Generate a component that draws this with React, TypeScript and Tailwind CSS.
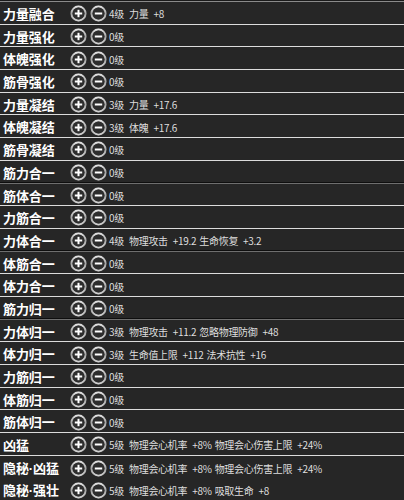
import React from 'react';

type Row = { name: string; level: number; attrs?: [string, string][] };

const rows: Row[] = [
  { name: '力量融合', level: 4, attrs: [['力量', '+8']] },
  { name: '力量强化', level: 0 },
  { name: '体魄强化', level: 0 },
  { name: '筋骨强化', level: 0 },
  { name: '力量凝结', level: 3, attrs: [['力量', '+17.6']] },
  { name: '体魄凝结', level: 3, attrs: [['体魄', '+17.6']] },
  { name: '筋骨凝结', level: 0 },
  { name: '筋力合一', level: 0 },
  { name: '筋体合一', level: 0 },
  { name: '力筋合一', level: 0 },
  { name: '力体合一', level: 4, attrs: [['物理攻击', '+19.2'], ['生命恢复', '+3.2']] },
  { name: '体筋合一', level: 0 },
  { name: '体力合一', level: 0 },
  { name: '筋力归一', level: 0 },
  { name: '力体归一', level: 3, attrs: [['物理攻击', '+11.2'], ['忽略物理防御', '+48']] },
  { name: '体力归一', level: 3, attrs: [['生命值上限', '+112'], ['法术抗性', '+16']] },
  { name: '力筋归一', level: 0 },
  { name: '体筋归一', level: 0 },
  { name: '筋体归一', level: 0 },
  { name: '凶猛', level: 5, attrs: [['物理会心机率', '+8%'], ['物理会心伤害上限', '+24%']] },
  { name: '隐秘·凶猛', level: 5, attrs: [['物理会心机率', '+8%'], ['物理会心伤害上限', '+24%']] },
  { name: '隐秘·强壮', level: 5, attrs: [['物理会心机率', '+8%'], ['吸取生命', '+8']] },
];

function RoundButton({ minus }: { minus?: boolean }) {
  const id = minus ? 'rm' : 'rp';
  return (
    <svg width="17" height="17" viewBox="0 0 17 17" className="shrink-0">
      <defs>
        <linearGradient id={id} x1="0" y1="0" x2="0" y2="1">
          <stop offset="0" stopColor="#e0e0e0" />
          <stop offset="0.5" stopColor="#a4a4a4" />
          <stop offset="1" stopColor="#d0d0d0" />
        </linearGradient>
      </defs>
      <circle cx="8.5" cy="8.5" r="8.3" fill="#444" />
      <circle cx="8.5" cy="8.5" r="7" fill="none" stroke={`url(#${id})`} strokeWidth="1.9" />
      <circle cx="8.5" cy="8.5" r="5.9" fill="#2d2d2d" />
      <line x1="4.8" y1="8.5" x2="12.2" y2="8.5" stroke="#fff" strokeWidth="2" />
      {!minus && <line x1="8.5" y1="4.8" x2="8.5" y2="12.2" stroke="#fff" strokeWidth="2" />}
    </svg>
  );
}

// names with a middle dot use a narrow latin dot like the game font
function Name({ text }: { text: string }) {
  const parts = text.split('·');
  if (parts.length === 1) return <>{text}</>;
  return (
    <>
      {parts[0]}
      <span className="font-['Liberation_Sans'] font-bold">·</span>
      {parts[1]}
    </>
  );
}

function SkillRow({ row }: { row: Row }) {
  return (
    <div className="h-[22.7px] flex flex-col">
      <div className="flex-1 flex items-center pt-[2px] bg-[#262626]">
        <div className="w-[70px] pl-[3px] text-white font-bold text-[13px] tracking-[-0.1px] whitespace-nowrap">
          <Name text={row.name} />
        </div>
        <div className="flex items-center gap-[3px]">
          <RoundButton />
          <RoundButton minus />
        </div>
        <div className="ml-[2px] flex items-center text-[10px] text-[#dedede] whitespace-nowrap tracking-[-0.3px]">
          <span className="w-[20px]">{row.level}级</span>
          {row.attrs?.map(([k, v], i) => (
            <span key={i} className={i > 0 ? 'ml-[3px]' : ''}>
              {k}
              <span className="ml-[5px]">{v}</span>
            </span>
          ))}
        </div>
      </div>
      <div className="h-[3px] bg-[linear-gradient(#0e0e0e_0,#0e0e0e_30%,#dcdcdc_30%,#dcdcdc_75%,#6e6e6e_75%)]" />
    </div>
  );
}

export default function App() {
  return (
    <div
      className="w-[404px] h-[500px] overflow-hidden bg-[#262626]"
      style={{ fontFamily: '"Noto Sans CJK SC", "Noto Sans", sans-serif' }}
    >
      <div className="h-[2px] bg-[linear-gradient(#1a1a1a_0,#1a1a1a_50%,#8a8a8a_50%)]" />
      {rows.map((r) => (
        <SkillRow key={r.name} row={r} />
      ))}
    </div>
  );
}
